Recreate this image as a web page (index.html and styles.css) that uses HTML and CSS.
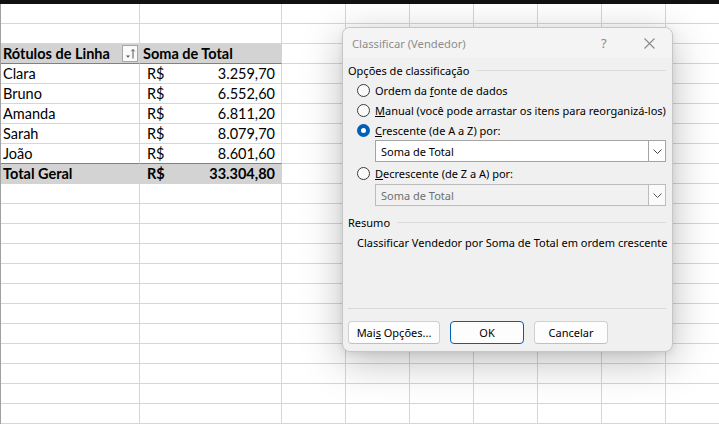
FILE: index.html
```html
<!DOCTYPE html>
<html lang="pt-BR">
<head>
<meta charset="utf-8">
<title>Classificar (Vendedor)</title>
<link rel="stylesheet" href="styles.css">
</head>
<body>
<div class="topbar"></div>
<div class="main">
  <div class="leftbar"></div>
  <div class="sheet">
    <div class="row"><i></i><i></i><i></i><i></i><i></i><i></i><i></i><i></i><i></i></div>
    <div class="row"><i></i><i></i><i></i><i></i><i></i><i></i><i></i><i></i><i></i></div>
    <div class="row head">
      <i class="c-a"><span>Rótulos de Linha</span>
        <span class="filter"><svg width="14" height="15" viewBox="0 0 14 15"><path d="M3 9.5h4l-2 2.2z" fill="#555"/><path d="M10 12.5V3.5M8.3 5.3L10 3.5l1.7 1.8" stroke="#555" stroke-width="1" fill="none"/></svg></span>
      </i>
      <i class="c-b">Soma de Total</i><i></i><i></i><i></i><i></i><i></i><i></i><i></i>
    </div>
    <div class="row"><i class="c-a">Clara</i><i class="c-b money"><span>R$</span><span>3.259,70</span></i><i></i><i></i><i></i><i></i><i></i><i></i><i></i></div>
    <div class="row"><i class="c-a">Bruno</i><i class="c-b money"><span>R$</span><span>6.552,60</span></i><i></i><i></i><i></i><i></i><i></i><i></i><i></i></div>
    <div class="row"><i class="c-a">Amanda</i><i class="c-b money"><span>R$</span><span>6.811,20</span></i><i></i><i></i><i></i><i></i><i></i><i></i><i></i></div>
    <div class="row"><i class="c-a">Sarah</i><i class="c-b money"><span>R$</span><span>8.079,70</span></i><i></i><i></i><i></i><i></i><i></i><i></i><i></i></div>
    <div class="row last"><i class="c-a">João</i><i class="c-b money"><span>R$</span><span>8.601,60</span></i><i></i><i></i><i></i><i></i><i></i><i></i><i></i></div>
    <div class="row total"><i class="c-a">Total Geral</i><i class="c-b money"><span>R$</span><span>33.304,80</span></i><i></i><i></i><i></i><i></i><i></i><i></i><i></i></div>
    <div class="row"><i></i><i></i><i></i><i></i><i></i><i></i><i></i><i></i><i></i></div>
    <div class="row"><i></i><i></i><i></i><i></i><i></i><i></i><i></i><i></i><i></i></div>
    <div class="row"><i></i><i></i><i></i><i></i><i></i><i></i><i></i><i></i><i></i></div>
    <div class="row"><i></i><i></i><i></i><i></i><i></i><i></i><i></i><i></i><i></i></div>
    <div class="row"><i></i><i></i><i></i><i></i><i></i><i></i><i></i><i></i><i></i></div>
    <div class="row"><i></i><i></i><i></i><i></i><i></i><i></i><i></i><i></i><i></i></div>
    <div class="row"><i></i><i></i><i></i><i></i><i></i><i></i><i></i><i></i><i></i></div>
    <div class="row"><i></i><i></i><i></i><i></i><i></i><i></i><i></i><i></i><i></i></div>
    <div class="row"><i></i><i></i><i></i><i></i><i></i><i></i><i></i><i></i><i></i></div>
    <div class="row"><i></i><i></i><i></i><i></i><i></i><i></i><i></i><i></i><i></i></div>
    <div class="row"><i></i><i></i><i></i><i></i><i></i><i></i><i></i><i></i><i></i></div>
    <div class="row"><i></i><i></i><i></i><i></i><i></i><i></i><i></i><i></i><i></i></div>
  </div>
</div>

<div class="dialog">
  <div class="titlebar">
    <span class="title">Classificar (Vendedor)</span>
    <span class="help">?</span>
    <span class="close"><svg width="11" height="11" viewBox="0 0 11 11"><path d="M0.5 0.5l10 10M10.5 0.5l-10 10" stroke="#8a8a8a" stroke-width="1.1"/></svg></span>
  </div>
  <div class="body">
    <div class="group"><span>Opções de classificação</span><span class="rule"></span></div>
    <div class="radio"><span class="dot"></span><span>Ordem da <u>f</u>onte de dados</span></div>
    <div class="radio"><span class="dot"></span><span><u>M</u>anual (você pode arrastar os itens para reorganizá-los)</span></div>
    <div class="radio"><span class="dot on"></span><span><u>C</u>rescente (de A a Z) por:</span></div>
    <div class="combo"><span class="val">Soma de Total</span><span class="arrow"><svg width="9" height="5" viewBox="0 0 9 5"><path d="M0.5 0.5l4 4 4-4" stroke="#444" fill="none"/></svg></span></div>
    <div class="radio tall"><span class="dot"></span><span><u>D</u>ecrescente (de Z a A) por:</span></div>
    <div class="combo disabled"><span class="val">Soma de Total</span><span class="arrow"><svg width="9" height="5" viewBox="0 0 9 5"><path d="M0.5 0.5l4 4 4-4" stroke="#555" fill="none"/></svg></span></div>
    <div class="group resumo"><span>Resumo</span><span class="rule"></span></div>
    <div class="summary">Classificar Vendedor por Soma de Total em ordem crescente</div>
    <div class="spacer"></div>
    <div class="sep"></div>
    <div class="buttons">
      <span class="btn wide"><span>Mai<u>s</u> Opções...</span></span>
      <span class="btn primary"><span>OK</span></span>
      <span class="btn"><span>Cancelar</span></span>
    </div>
  </div>
</div>
</body>
</html>
```

FILE: styles.css
```css
html, body {
  margin: 0;
  padding: 0;
  background: #ffffff;
  overflow: hidden;
}
body {
  width: 719px;
  height: 427px;
  position: relative;
  font-family: "Lato", "Liberation Sans", sans-serif;
}
.topbar {
  height: 4px;
  background: #111;
}
.main {
  display: flex;
}
.leftbar {
  width: 2px;
  border-right: 1px solid #a0a0a0;
  background: #111;
}
.sheet {
  flex: 1;
}
.row {
  display: grid;
  grid-template-columns: 139px 142px repeat(7, 64px) 1fr;
  height: 20px;
}
.row i {
  font-style: normal;
  box-sizing: border-box;
  height: 20px;
  border-right: 1px solid #d6d6d6;
  border-bottom: 1px solid #d6d6d6;
  font-size: 14.5px;
  line-height: 19px;
  color: #000;
  white-space: nowrap;
  overflow: hidden;
}
.c-a {
  padding-left: 2px;
  display: flex;
  align-items: center;
}
.c-b {
  padding-left: 3px;
}
.money {
  display: flex;
  justify-content: space-between;
  padding: 0 6px 0 7px;
}
.head i.c-a, .head i.c-b {
  background: #d3d3d3;
  font-weight: bold;
  border-bottom: 1px solid #808080;
  border-right-color: #d3d3d3;
}
.total i.c-a, .total i.c-b {
  background: #d3d3d3;
  font-weight: bold;
  border-bottom-color: #d3d3d3;
  border-right-color: #d3d3d3;
}
.last i.c-a, .last i.c-b {
  border-bottom: 1px solid #808080;
}
.filter {
  margin-left: auto;
  margin-right: 1px;
  width: 14px;
  height: 15px;
  border: 1px solid #a6a6a6;
  background: #fafafa;
  display: flex;
}

/* dialog */
.dialog {
  position: absolute;
  left: 342px;
  top: 27px;
  width: 331px;
  height: 325px;
  box-sizing: border-box;
  border: 1px solid #c6c6c6;
  border-radius: 8px;
  background: #f0f0f0;
  box-shadow: 0 10px 40px rgba(0, 0, 0, 0.26), 0 2px 6px rgba(0, 0, 0, 0.08);
  font-family: "Noto Sans", "Open Sans", sans-serif;
  font-size: 11px;
  color: #000;
  display: flex;
  flex-direction: column;
  overflow: hidden;
  white-space: nowrap;
}
.titlebar {
  height: 30px;
  flex: none;
  background: #f4f4f4;
  display: flex;
  align-items: center;
  padding-left: 9px;
  color: #8c8c8c;
  font-size: 11.2px;
}
.title {
  flex: 1;
}
.help {
  font-size: 13px;
  width: 12px;
  margin-right: 31px;
  color: #8a8a8a;
}
.close {
  width: 11px;
  height: 11px;
  margin-right: 17px;
  display: flex;
}
.body {
  flex: 1;
  display: flex;
  flex-direction: column;
  padding: 2px 6px 7px 5px;
}
.group {
  height: 20px;
  display: flex;
  align-items: center;
}
.rule {
  flex: 1;
  height: 1px;
  background: #dcdcdc;
  margin-left: 7px;
  margin-top: 1px;
}
.resumo {
  margin-top: 6px;
}
.radio {
  height: 20px;
  display: flex;
  align-items: center;
  padding-left: 9px;
  gap: 5px;
}
.radio.tall {
  height: 22px;
}
.dot {
  width: 13px;
  height: 13px;
  box-sizing: border-box;
  border: 1px solid #3b3b3b;
  border-radius: 50%;
  background: #fbfbfb;
  flex: none;
}
.dot.on {
  border: 4px solid #005fb8;
  background: #ffffff;
}
.combo {
  margin-left: 27px;
  height: 22px;
  box-sizing: border-box;
  border: 1px solid #a4a4a4;
  background: #ffffff;
  display: flex;
  align-items: center;
}
.combo .val {
  flex: 1;
  padding-left: 5px;
}
.combo .arrow {
  width: 16px;
  height: 20px;
  border-left: 1px solid #a4a4a4;
  display: flex;
  align-items: center;
  justify-content: center;
  background: #ffffff;
}
.combo.disabled {
  background: #f1f1f1;
  border-color: #bcbcbc;
  color: #6f6f6f;
}
.combo.disabled .arrow {
  border-left-color: #bcbcbc;
  background: #fafafa;
}
.summary {
  height: 20px;
  line-height: 20px;
  margin-top: 1px;
  padding-left: 9px;
}
.spacer {
  flex: 1;
}
.sep {
  height: 1px;
  background: #d8d8d8;
}
.buttons {
  margin-top: 12px;
  display: flex;
  gap: 10px;
}
.btn {
  width: 74px;
  height: 23px;
  box-sizing: border-box;
  border: 1px solid #d0d0d0;
  border-bottom-color: #c0c0c0;
  border-radius: 4px;
  background: #fdfdfd;
  display: flex;
  align-items: center;
  justify-content: center;
}
.btn.wide {
  width: 92px;
}
.btn.primary {
  border: 1px solid #005fb8;
}
```
